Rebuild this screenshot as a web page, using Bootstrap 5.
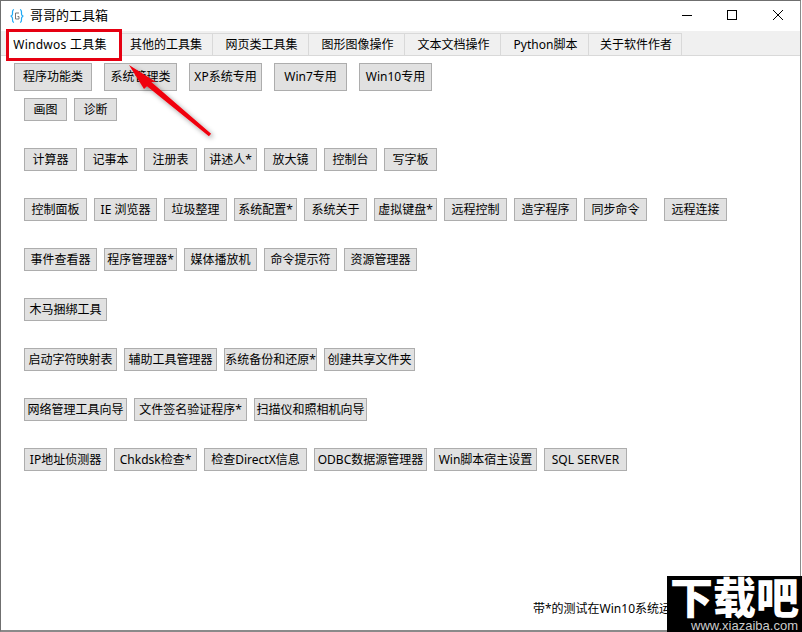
<!DOCTYPE html>
<html lang="zh-CN">
<head>
  <meta charset="UTF-8">
  <meta name="viewport" content="width=device-width, initial-scale=1">
  <title>哥哥的工具箱</title>
  <link href="https://cdn.jsdelivr.net/npm/bootstrap@5.3.3/dist/css/bootstrap.min.css" rel="stylesheet">
  <style>
    html, body { height: 100%; }
    body {
      background: #fff;
      color: #000;
      font-family: "Noto Sans", "Noto Sans CJK SC", sans-serif;
      font-size: 12px;
      overflow: hidden;
    }
    .app-window {
      position: relative;
      width: 801px;
      height: 632px;
      border: 1px solid #6f6f6f;
      border-bottom: 2px solid #8a8a8a;
      border-right-color: #8a8a8a;
      overflow: hidden;
    }
    .title-bar { height: 30px; padding-left: 9px; }
    .title-text { font-size: 13px; margin-left: 6px; }
    .win-btn { width: 46px; height: 30px; }
    .tab-strip { background: #f0f0f0; height: 25px; padding-left: 7px; border-bottom: 1px solid #d9d9d9; }
    .tab-cell {
      border-right: 1px solid #d9d9d9;
      border-top: 1px solid #d9d9d9;
      background: #f0f0f0;
      display: flex;
      align-items: center;
      justify-content: center;
      height: 22px;
      margin-top: 2px;
      padding-left: 2px;
      white-space: nowrap;
    }
    .tab-on { background: #fff; border: 0; width: 112px; height: 27px; padding: 0 8px 0 0; position: relative; z-index: 1; margin-top: 0; letter-spacing: .25px; }
    .tab-std { width: 96px; }
    .tab-sm { width: 88px; }
    .tab-lg { width: 93px; }
    .tab-first { width: 93px; padding-left: 0; }
    .tool-area { padding: 7px 0 0 13px; }
    .tool-row { display: flex; gap: 7px; padding-left: 10px; margin-top: 27px; }
    .tool-row-first { gap: 12px; padding-left: 0; margin-top: 0; }
    .tool-row-second { margin-top: 7px; }
    .tool-btn {
      height: 23px;
      padding: 0;
      border: 1px solid #adadad;
      border-radius: 0;
      background: #e1e1e1;
      color: #000;
      font-size: 12px;
      line-height: 1;
      white-space: nowrap;
      display: flex;
      align-items: center;
      justify-content: center;
    }
    .tool-row-first .tool-btn { height: 28px; width: 73px; }
    .tool-row-first .tool-btn:first-child { width: 78px; }
    .w43 { width: 43px; }
    .w53 { width: 53px; }
    .w63 { width: 63px; }
    .w73 { width: 73px; }
    .w83 { width: 83px; }
    .w93 { width: 93px; }
    .w91 { width: 91px; }
    .w103 { width: 103px; }
    .w113 { width: 113px; }
    .push-10 { margin-left: 10px; }
    .note-text { position: absolute; left: 532px; top: 599px; white-space: nowrap; }
    .red-box { position: absolute; left: 5px; top: 28px; width: 116px; height: 32px; border: 3px solid #e60012; z-index: 2; }
    .red-arrow { position: absolute; left: 120px; top: 60px; z-index: 3; }
    .wm-box {
      position: absolute;
      right: 0;
      bottom: 0;
      width: 135px;
      height: 56px;
      background: #000;
      color: #fff;
      z-index: 4;
      text-align: center;
    }
    .wm-main { font-size: 43px; font-weight: 900; line-height: 44px; height: 44px; white-space: nowrap; }
    .wm-url { font-family: "Liberation Sans", sans-serif; font-size: 13px; line-height: 12px; color: #ccc; text-align: right; padding-right: 4px; }
  </style>
</head>
<body>

<div class="app-window">
  <!-- title bar -->
  <div class="title-bar d-flex align-items-center">
    <svg width="14" height="16" viewBox="0 0 14 16" fill="none" stroke="#1fa9f5" stroke-width="1.2">
      <path d="M4 1.500C2 2 2.500 4 2.500 6S1 7.500 1 8s1.500.5 1.500 2.500S2 14 4 14.500M10 1.500c2 .5 1.500 2.500 1.500 4.500s1.500 1.500 1.500 2-1.500.5-1.500 2.500.5 3.500-1.500 4"/>
      <path d="M9 5H5.500v6H9V8.500H7.500" stroke="#777" stroke-width="1"/>
    </svg>
    <span class="title-text">哥哥的工具箱</span>
    <div class="ms-auto d-flex">
      <div class="win-btn d-flex align-items-center justify-content-center">
        <svg width="14" height="12"><path d="M4 5.500h10" stroke="#000"/></svg>
      </div>
      <div class="win-btn d-flex align-items-center justify-content-center">
        <svg width="14" height="12"><rect x="3.500" y=".5" width="9" height="9" fill="none" stroke="#000"/></svg>
      </div>
      <div class="win-btn d-flex align-items-center justify-content-center">
        <svg width="14" height="12"><path d="M3 0l10 10M13 0L3 10" stroke="#000"/></svg>
      </div>
    </div>
  </div>

  <!-- tabs -->
  <div class="tab-strip d-flex">
    <div class="tab-cell tab-on">Windwos 工具集</div>
    <div class="tab-cell tab-first">其他的工具集</div>
    <div class="tab-cell tab-std">网页类工具集</div>
    <div class="tab-cell tab-std">图形图像操作</div>
    <div class="tab-cell tab-std">文本文档操作</div>
    <div class="tab-cell tab-sm">Python脚本</div>
    <div class="tab-cell tab-lg">关于软件作者</div>
  </div>

  <!-- buttons -->
  <div class="tool-area">
    <div class="tool-row tool-row-first">
      <button class="btn tool-btn">程序功能类</button>
      <button class="btn tool-btn">系统管理类</button>
      <button class="btn tool-btn">XP系统专用</button>
      <button class="btn tool-btn">Win7专用</button>
      <button class="btn tool-btn">Win10专用</button>
    </div>
    <div class="tool-row tool-row-second">
      <button class="btn tool-btn w43">画图</button>
      <button class="btn tool-btn w43">诊断</button>
    </div>
    <div class="tool-row">
      <button class="btn tool-btn w53">计算器</button>
      <button class="btn tool-btn w53">记事本</button>
      <button class="btn tool-btn w53">注册表</button>
      <button class="btn tool-btn w53">讲述人*</button>
      <button class="btn tool-btn w53">放大镜</button>
      <button class="btn tool-btn w53">控制台</button>
      <button class="btn tool-btn w53">写字板</button>
    </div>
    <div class="tool-row">
      <button class="btn tool-btn w63">控制面板</button>
      <button class="btn tool-btn w63">IE 浏览器</button>
      <button class="btn tool-btn w63">垃圾整理</button>
      <button class="btn tool-btn w63">系统配置*</button>
      <button class="btn tool-btn w63">系统关于</button>
      <button class="btn tool-btn w63">虚拟键盘*</button>
      <button class="btn tool-btn w63">远程控制</button>
      <button class="btn tool-btn w63">造字程序</button>
      <button class="btn tool-btn w63">同步命令</button>
      <button class="btn tool-btn w63 push-10">远程连接</button>
    </div>
    <div class="tool-row">
      <button class="btn tool-btn w73">事件查看器</button>
      <button class="btn tool-btn w73">程序管理器*</button>
      <button class="btn tool-btn w73">媒体播放机</button>
      <button class="btn tool-btn w73">命令提示符</button>
      <button class="btn tool-btn w73">资源管理器</button>
    </div>
    <div class="tool-row">
      <button class="btn tool-btn w83">木马捆绑工具</button>
    </div>
    <div class="tool-row">
      <button class="btn tool-btn w93">启动字符映射表</button>
      <button class="btn tool-btn w93">辅助工具管理器</button>
      <button class="btn tool-btn w93">系统备份和还原*</button>
      <button class="btn tool-btn w91">创建共享文件夹</button>
    </div>
    <div class="tool-row">
      <button class="btn tool-btn w103">网络管理工具向导</button>
      <button class="btn tool-btn w113">文件签名验证程序*</button>
      <button class="btn tool-btn w113">扫描仪和照相机向导</button>
    </div>
    <div class="tool-row">
      <button class="btn tool-btn w83">IP地址侦测器</button>
      <button class="btn tool-btn w83">Chkdsk检查*</button>
      <button class="btn tool-btn w103">检查DirectX信息</button>
      <button class="btn tool-btn w113">ODBC数据源管理器</button>
      <button class="btn tool-btn w103">Win脚本宿主设置</button>
      <button class="btn tool-btn w83">SQL SERVER</button>
    </div>
  </div>

  <span class="note-text">带*的测试在Win10系统运</span>

  <!-- annotation drawn over the screenshot -->
  <div class="red-box"></div>
  <svg class="red-arrow" width="100" height="85" viewBox="0 0 100 85">
    <defs><filter id="arrowShade" x="-20%" y="-20%" width="140%" height="140%"><feDropShadow dx="2" dy="2" stdDeviation="2.500" flood-color="#000" flood-opacity=".4"/></filter></defs>
    <g filter="url(#arrowShade)" fill="#f0000f">
      <path d="M8 4L35 21 30 20.700 90.100 72.700 87.900 75.300 26 25.300 23 28Z"/>
    </g>
  </svg>
</div>

<!-- watermark -->
<div class="wm-box">
  <div class="wm-main">下载吧</div>
  <div class="wm-url">www.xiazaiba.com</div>
</div>

<script src="https://cdn.jsdelivr.net/npm/bootstrap@5.3.3/dist/js/bootstrap.bundle.min.js"></script>
</body>
</html>
